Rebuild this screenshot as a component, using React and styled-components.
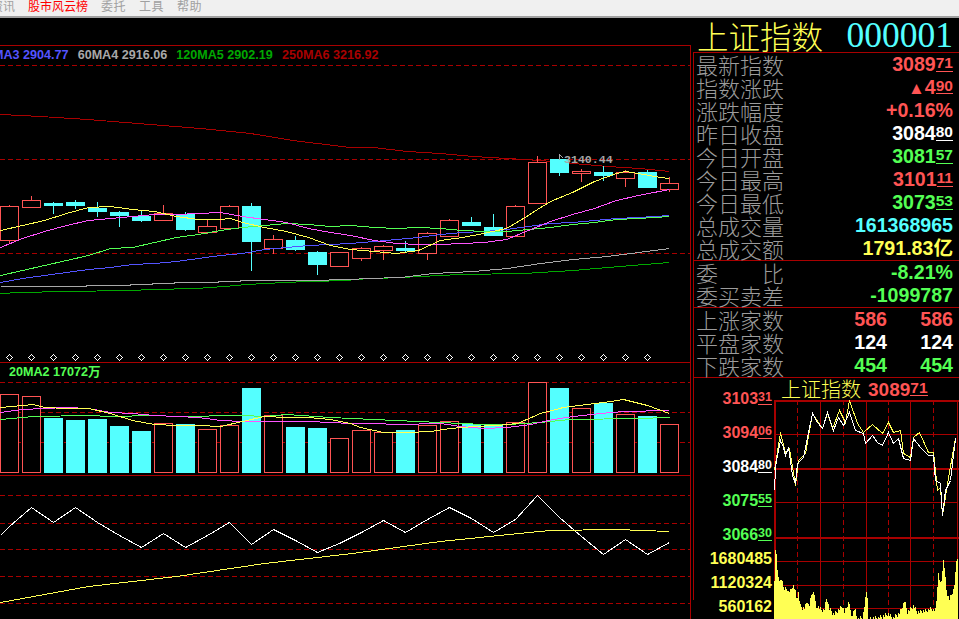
import React from "react";
import styled, { createGlobalStyle } from "styled-components";

const RED = "#ff5454";
const CYAN = "#54ffff";
const YELLOW = "#ffff54";
const MAGENTA = "#ff54ff";
const GREEN = "#54ff54";
const BLUE = "#5454ff";
const GRAY = "#a8a8a8";
const DARKGREEN = "#00a800";
const DARKRED = "#a80000";
const SANS = `"Liberation Sans", Arial, sans-serif`;
const CJK = `"Noto Sans CJK SC", sans-serif`;

const toneColor = { red: RED, white: "#ffffff", green: GREEN, cyan: CYAN, yellow: YELLOW };

const GlobalStyle = createGlobalStyle`
  html, body { margin: 0; padding: 0; background: #000; overflow: hidden; }
  * { box-sizing: border-box; }
`;

const Page = styled.div`
  width: 959px;
  height: 619px;
  background: #000;
  overflow: hidden;
  font-family: ${SANS};
`;
const MenuBar = styled.div`
  display: flex;
  gap: 13px;
  height: 18px;
  background: #f0f0f0;
  border-bottom: 2px solid #a0a0a0;
  overflow: hidden;
  font-family: ${CJK};
  font-size: 12px;
  line-height: 12px;
`;
const MenuItem = styled.span`
  color: ${(p) => (p.$active ? "#ff0000" : "#a0a0a0")};
  margin-left: ${(p) => (p.$clipped ? "-9px" : "0")};
  letter-spacing: ${(p) => (p.$active || p.$clipped ? "0" : "0.5px")};
`;
const Body = styled.div`
  display: flex;
  height: 601px;
`;
const LeftColumn = styled.div`
  width: 691px;
  padding-top: 27px;
`;
const ChartFrame = styled.div`
  height: 574px;
  border-top: 1px solid ${DARKRED};
  border-right: 1px solid ${DARKRED};
  overflow: hidden;
`;
const Legend = styled.div`
  display: flex;
  gap: 9px;
  height: 19px;
  margin-left: ${(p) => p.$shift || 0}px;
  font-size: 12.6px;
  font-weight: 700;
  line-height: 19px;
  white-space: nowrap;
  font-family: ${SANS}, ${CJK};
`;
const LegendItem = styled.span`
  color: ${(p) => p.$color};
`;
const VolumeTitle = styled.div`
  height: 20px;
  padding-left: 9px;
  border-top: 1px solid ${DARKRED};
  font-family: ${SANS}, ${CJK};
  font-size: 12.6px;
  font-weight: 700;
  line-height: 18px;
  white-space: nowrap;
`;
const Plot = styled.svg`
  display: block;
  width: ${(p) => p.$w}px;
  height: ${(p) => p.$h}px;
  background: #000;
`;
const IndicatorPane = styled.div`
  border-top: 1px solid ${DARKRED};
`;
const RightColumn = styled.div`
  width: 266px;
  margin-left: 2px;
`;
const Header = styled.div`
  display: flex;
  justify-content: space-between;
  align-items: center;
  height: 34px;
  padding: 0 6px 0 4px;
`;
const HeaderName = styled.span`
  color: ${YELLOW};
  font-family: ${CJK};
  font-size: 31.5px;
  font-weight: 300;
  line-height: 34px;
`;
const HeaderCode = styled.span`
  color: ${CYAN};
  font-family: "Liberation Serif", serif;
  font-size: 35.5px;
  line-height: 34px;
`;
const StatGroup = styled.div`
  border-top: 1px solid ${DARKRED};
  border-left: 1px solid ${DARKRED};
  padding: 0 6px 0 2px;
`;
const Row = styled.div`
  display: flex;
  justify-content: space-between;
  align-items: center;
  height: 23px;
`;
const Label = styled.span`
  display: flex;
  justify-content: space-between;
  width: 88px;
  color: #9c9c9c;
  font-family: ${CJK};
  font-size: 22px;
  font-weight: 300;
  line-height: 23px;
`;
const Value = styled.span`
  color: ${(p) => toneColor[p.$tone]};
  font-size: ${(p) => p.$size || 19.6}px;
  font-weight: 700;
  line-height: 23px;
  white-space: nowrap;
  font-family: ${SANS}, ${CJK};
`;
const Cents = styled.span`
  display: inline-block;
  font-size: ${(p) => p.$size || 15.5}px;
  line-height: 1;
  border-bottom: 1px solid currentColor;
  vertical-align: 3px;
`;
const Arrow = styled.span`
  font-size: 17px;
`;
const DualValues = styled.div`
  display: flex;
`;
const DualCell = styled(Value)`
  width: 66px;
  text-align: right;
`;
const MiniPanel = styled.div`
  display: flex;
  height: 223px;
  border-top: 1px solid ${DARKRED};
  border-left: 1px solid ${DARKRED};
`;
const Axis = styled.div`
  width: 80px;
  padding: 4px 2px 0 0;
  text-align: right;
`;
const Tick = styled.div`
  height: ${(p) => p.$h}px;
  line-height: ${(p) => p.$h}px;
  margin-top: ${(p) => p.$pull || 0}px;
`;
const MiniMain = styled.div`
  flex: 1;
  min-width: 0;
`;
const MiniTitle = styled.div`
  display: flex;
  gap: 7px;
  height: 22px;
  padding-left: 7px;
  align-items: center;
`;
const MiniName = styled.span`
  color: ${YELLOW};
  font-family: ${CJK};
  font-size: 20px;
  font-weight: 300;
  line-height: 22px;
`;

// [wick top, wick bottom, body top, body bottom, rising]
const candles = [
  [205, 244, 206, 240, 1], [196, 208, 200, 207, 1], [202, 214, 203, 205, 0], [200, 209, 202, 205, 0],
  [202, 217, 208, 211, 0], [211, 227, 212, 215, 0], [210, 222, 216, 220, 0], [205, 221, 213, 220, 1],
  [212, 231, 214, 229, 0], [220, 234, 226, 232, 1], [205, 229, 206, 228, 1], [203, 271, 206, 241, 0],
  [235, 254, 239, 248, 1], [236, 251, 240, 249, 0], [251, 275, 252, 264, 0], [252, 267, 252, 266, 1],
  [247, 261, 248, 258, 1], [245, 260, 246, 250, 1], [241, 253, 248, 250, 0], [232, 260, 233, 253, 1],
  [219, 237, 220, 236, 1], [217, 226, 222, 225, 0], [214, 236, 227, 235, 0], [205, 237, 206, 236, 1],
  [156, 204, 162, 203, 1], [154, 176, 159, 172, 0], [169, 182, 171, 173, 1], [166, 181, 172, 175, 0],
  [170, 187, 172, 178, 1], [170, 188, 172, 187, 0], [177, 192, 183, 189, 1],
];

// x,y pairs in page coordinates
const priceLines = [
  [YELLOW, "0,230 22,225 44,220 66,213 88,207 110,206 132,209 154,211 176,216 198,219 220,219 230,218 242,222 264,227 286,231 308,237 330,245 350,249 374,251 396,253 418,250 440,240 462,237 483,233 506,228 523,218 537,209 550,201 572,192 594,181 616,173 625,171 638,173 660,177 669,178"],
  [MAGENTA, "0,247 22,238 44,231 66,225 88,220 110,218 132,216 154,214 176,214 198,213 220,212 242,216 264,219 286,222 308,228 330,232 350,235 374,240 396,243 418,244 440,244 462,243 484,242 506,239 528,230 550,221 572,214 594,208 616,200 638,195 669,189"],
  [GREEN, "0,275 22,270 44,265 66,260 88,255 110,248 132,247 154,242 176,237 198,234 220,230 242,227 264,225 286,223 308,224 330,226 350,225 374,227 396,228 418,227 440,228 462,230 484,231 506,231 528,229 550,227 572,224 594,222 616,219 638,218 669,216"],
  [BLUE, "0,282 22,278 44,275 66,272 88,269 110,267 132,264 154,263 176,261 198,258 220,255 242,253 264,249 286,247 308,245 330,244 350,243 374,241 396,239 418,237 440,234 462,232 484,231 506,229 528,226 550,223 572,222 594,220 616,218 638,217 669,215"],
  [GRAY, "0,286 86,286 86,285 130,285 130,284 152,284 152,283 174,283 174,282 218,282 218,281 240,281 240,280 307,280 350,279 367,278 400,277 433,273 473,271 507,268 540,263 573,259 607,256 669,248"],
  [DARKGREEN, "0,293 20,292 64,291 130,290 152,289 196,288 224,286 246,284 284,282 307,281 350,280 350,279 400,277 460,274 523,273 573,270 607,267 669,262"],
  [DARKRED, "0,114 20,115 40,116 87,119 150,124 200,128 250,133 292,140 350,147 373,147 407,151 440,153 473,156 507,158 540,160 573,163 607,166 640,168 669,171"],
];

// [bar top, rising]
const volumes = [
  [394, 1], [396, 1], [418, 0], [420, 0], [419, 0], [426, 0], [431, 0], [423, 1], [424, 0], [429, 1], [425, 1],
  [388, 0], [415, 1], [427, 0], [428, 0], [438, 1], [430, 1], [432, 1], [430, 0], [425, 1], [421, 1], [424, 0],
  [424, 0], [422, 1], [382, 1], [388, 0], [408, 1], [403, 0], [414, 1], [416, 0], [424, 1],
];

const volumeLines = [
  [GREEN, "0,419 22,417 33,416 88,415 110,416 154,415 176,416 242,415 264,416 286,414 330,417 373,419 417,421 440,422 483,424 507,424 540,422 570,419 637,418 669,417"],
  [MAGENTA, "0,412 22,409 44,408 66,407 88,408 110,412 132,413 154,415 176,416 198,417 220,420 242,421 264,421 286,421 308,421 330,422 350,423 373,423 397,424 440,423 460,426 483,428 507,427 530,424 553,419 573,416 600,413 623,411 669,410"],
  [YELLOW, "0,407 22,405 33,404 44,407 66,408 88,408 110,413 132,420 154,424 176,425 198,425 220,426 242,421 264,416 286,417 308,417 330,419 350,423 360,427 383,432 407,432 430,431 450,428 473,426 497,425 517,423 540,413 563,407 587,404 610,401 623,399 647,405 669,413"],
];

const oscillator = [526, 507, 522, 507, 522, 535, 547, 533, 547, 535, 522, 544, 529, 540, 552, 543, 532, 520, 532, 519, 507, 518, 532, 519, 495, 517, 536, 554, 539, 554, 542];
const oscillatorAverage = "0,602 88,586 176,576 264,563 352,553 440,541 528,532 550,530 616,529 669,531";

const minuteWhite = [[252,270],[255,200],[262,165],[270,120],[278,140],[285,165],[295,140],[305,225],[315,250],[320,190],[340,170],[350,110],[367,40],[380,65],[395,85],[410,35],[430,90],[445,50],[460,75],[477,35],[495,90],[520,100],[524,130],[545,105],[560,125],[575,135],[595,95],[610,130],[625,115],[640,175],[660,180],[670,115],[690,140],[715,165],[730,165],[735,240],[750,250],[755,345],[765,270],[780,240],[795,115]];
const minuteYellow = [[252,210],[270,95],[285,160],[297,145],[315,255],[325,180],[345,160],[365,40],[395,85],[410,40],[425,85],[447,30],[465,65],[477,0],[500,70],[520,95],[545,72],[575,100],[595,65],[610,95],[630,90],[640,160],[660,170],[670,110],[687,95],[715,155],[730,155],[740,270],[750,260],[755,345],[775,230],[795,115]];
const minutePoints = (list) => list.map(([x, y]) => `${Math.round(690 + x / 3)},${Math.round(400 + y / 3)}`).join(" ");

const minuteVolume = [[12,150],[16,25],[19,100],[23,140],[27,150],[31,155],[35,140],[39,175],[50,175],[54,185],[60,180],[67,165],[73,175],[78,205],[84,185],[88,225],[95,232],[103,232],[110,210],[115,230],[124,185],[131,190],[136,235],[141,225],[147,235],[160,240],[168,200],[175,235],[190,252],[200,240],[215,225],[220,245],[235,213],[240,260],[252,233],[258,265],[275,262],[288,170],[292,267],[310,262],[330,260],[352,250],[365,262],[385,248],[400,210],[408,245],[427,225],[437,245],[465,240],[478,235],[493,240],[500,125],[508,170],[516,85],[525,185],[533,208],[547,175],[555,85]];

// one column per pixel, so the area keeps its spiky outline
const minuteVolumePath = () => {
  const points = minuteVolume.map(([x, y]) => [770 + x / 2.98, 530 + y / 2.98]);
  let d = "M774 619";
  for (let x = 774; x < 958; x++) {
    const next = points.findIndex((p) => p[0] >= x);
    const b = points[next < 0 ? points.length - 1 : next];
    const a = points[Math.max((next < 0 ? points.length - 1 : next) - 1, 0)];
    const t = b[0] === a[0] ? 0 : Math.min(Math.max((x - a[0]) / (b[0] - a[0]), 0), 1);
    const y = a[1] + (b[1] - a[1]) * t;
    const jitter = y > 575 ? ((x * 7) % 5) - 2 : 0;
    d += `V${Math.min(Math.round(y + jitter), 619)}H${x + 1}`;
  }
  return `${d}V619Z`;
};

const Dashed = ({ y, x2 = 690 }) => (
  <line x1="0" x2={x2} y1={y + 0.5} y2={y + 0.5} stroke={DARKRED} strokeDasharray="5 3" />
);
const Line = ({ color, points }) => (
  <polyline points={points} transform="translate(0.5 0.5)" fill="none" stroke={color} />
);

function PricePlot() {
  return (
    <Plot $w={690} $h={297} viewBox="0 65 690 297" shapeRendering="crispEdges">
      <Dashed y={65} />
      <Dashed y={159} />
      <Dashed y={253} />
      {priceLines.slice().reverse().map(([color, points]) => (
        <Line key={color} color={color} points={points} />
      ))}
      {candles.map(([top, bottom, bodyTop, bodyBottom, rising], i) => {
        const x = 22 * i;
        const color = rising ? RED : CYAN;
        return (
          <g key={i}>
            <line x1={x + 9.5} x2={x + 9.5} y1={top} y2={bottom} stroke={color} />
            <rect x={x + 0.5} y={bodyTop + 0.5} width={18} height={bodyBottom - bodyTop} fill={rising ? "#000" : CYAN} stroke={color} />
          </g>
        );
      })}
      {priceLines.slice(0, 4).reverse().map(([color, points]) => (
        <Line key={color} color={color} points={points} />
      ))}
      <path d="M559.5 160V154.5L563.5 158.5" fill="none" stroke={GRAY} />
      <text x="564" y="163" fill={GRAY} fontFamily={`"Liberation Mono", monospace`} fontWeight="700" fontSize="11.6" shapeRendering="auto">3140.44</text>
      {candles.slice(0, 30).map((_, i) => (
        <path key={i} d={`M${22 * i + 9.5} 354.5L${22 * i + 12.5} 357.5L${22 * i + 9.5} 360.5L${22 * i + 6.5} 357.5Z`} fill="none" stroke="#ffffff" />
      ))}
    </Plot>
  );
}

function VolumePlot() {
  return (
    <Plot $w={690} $h={93} viewBox="0 382 690 93" shapeRendering="crispEdges">
      <Dashed y={382} />
      <Dashed y={412} />
      <Dashed y={442} />
      {volumes.map(([top, rising], i) =>
        rising ? (
          <rect key={i} x={22 * i + 0.5} y={top + 0.5} width={18} height={472 - top} fill="#000" stroke={RED} />
        ) : (
          <rect key={i} x={22 * i} y={top} width={19} height={473 - top} fill={CYAN} />
        )
      )}
      {volumeLines.map(([color, points]) => (
        <Line key={color} color={color} points={points} />
      ))}
    </Plot>
  );
}

function IndicatorPlot() {
  const points = oscillator.map((y, i) => `${22 * i + 9},${y}`).join(" ");
  return (
    <Plot $w={690} $h={143} viewBox="0 476 690 143" shapeRendering="crispEdges">
      {[495, 523, 549, 576, 603].map((y) => (
        <Dashed key={y} y={y} />
      ))}
      <Line color="#ffffff" points={`0,535 ${points}`} />
      <Line color={YELLOW} points={oscillatorAverage} />
    </Plot>
  );
}

function MinutePlot() {
  return (
    <Plot $w={185} $h={219} viewBox="774 400 185 219" shapeRendering="crispEdges">
      <rect x="774" y="400" width="2" height="219" fill={DARKRED} />
      <rect x="774" y="400" width="185" height="2" fill={DARKRED} />
      <rect x="774" y="468" width="185" height="2" fill={DARKRED} />
      <rect x="774" y="537" width="185" height="2" fill={DARKRED} />
      {[434, 502, 561, 585, 608].map((y) => (
        <line key={y} x1="774" x2="958" y1={y + 0.5} y2={y + 0.5} stroke={DARKRED} />
      ))}
      {[820, 866, 910, 957].map((x) => (
        <line key={x} x1={x + 0.5} x2={x + 0.5} y1="400" y2="619" stroke={DARKRED} />
      ))}
      {[797, 843, 888, 933].map((x) => (
        <line key={x} x1={x + 0.5} x2={x + 0.5} y1="400" y2="619" stroke={DARKRED} strokeDasharray="5 3" />
      ))}
      <path d={minuteVolumePath()} fill={YELLOW} />
      <Line color={YELLOW} points={minutePoints(minuteYellow)} />
      <Line color="#ffffff" points={minutePoints(minuteWhite)} />
    </Plot>
  );
}

const Price = ({ tone, whole, cents }) => (
  <Value $tone={tone}>
    {whole}
    <Cents>{cents}</Cents>
  </Value>
);

const AxisPrice = ({ tone, whole, cents }) => (
  <Tick $h={34}>
    <Value $tone={tone} $size={16}>
      {whole}
      <Cents $size={12.5}>{cents}</Cents>
    </Value>
  </Tick>
);

export default function App() {
  return (
    <Page>
      <GlobalStyle />
      <MenuBar>
        <MenuItem $clipped>资讯</MenuItem>
        <MenuItem $active>股市风云榜</MenuItem>
        <MenuItem>委托</MenuItem>
        <MenuItem>工具</MenuItem>
        <MenuItem>帮助</MenuItem>
      </MenuBar>
      <Body>
        <LeftColumn>
          <ChartFrame>
            <Legend $shift={-21}>
              <LegendItem $color={BLUE}>30MA3 2904.77</LegendItem>
              <LegendItem $color={GRAY}>60MA4 2916.06</LegendItem>
              <LegendItem $color={DARKGREEN}>120MA5 2902.19</LegendItem>
              <LegendItem $color={DARKRED}>250MA6 3216.92</LegendItem>
            </Legend>
            <PricePlot />
            <VolumeTitle>
              <LegendItem $color={GREEN}>20MA2 17072万</LegendItem>
            </VolumeTitle>
            <VolumePlot />
            <IndicatorPane>
              <IndicatorPlot />
            </IndicatorPane>
          </ChartFrame>
        </LeftColumn>
        <RightColumn>
          <Header>
            <HeaderName>上证指数</HeaderName>
            <HeaderCode>000001</HeaderCode>
          </Header>
          <StatGroup>
            <Row><Label>最新指数</Label><Price tone="red" whole="3089" cents="71" /></Row>
            <Row>
              <Label>指数涨跌</Label>
              <Value $tone="red"><Arrow>▲</Arrow>4<Cents>90</Cents></Value>
            </Row>
            <Row><Label>涨跌幅度</Label><Value $tone="red">+0.16%</Value></Row>
            <Row><Label>昨日收盘</Label><Price tone="white" whole="3084" cents="80" /></Row>
            <Row><Label>今日开盘</Label><Price tone="green" whole="3081" cents="57" /></Row>
            <Row><Label>今日最高</Label><Price tone="red" whole="3101" cents="11" /></Row>
            <Row><Label>今日最低</Label><Price tone="green" whole="3073" cents="53" /></Row>
            <Row><Label>总成交量</Label><Value $tone="cyan">161368965</Value></Row>
            <Row><Label>总成交额</Label><Value $tone="yellow">1791.83亿</Value></Row>
          </StatGroup>
          <StatGroup>
            <Row><Label><span>委</span><span>比</span></Label><Value $tone="green">-8.21%</Value></Row>
            <Row><Label>委买卖差</Label><Value $tone="green">-1099787</Value></Row>
          </StatGroup>
          <StatGroup>
            <Row>
              <Label>上涨家数</Label>
              <DualValues><DualCell $tone="red">586</DualCell><DualCell $tone="red">586</DualCell></DualValues>
            </Row>
            <Row>
              <Label>平盘家数</Label>
              <DualValues><DualCell $tone="white">124</DualCell><DualCell $tone="white">124</DualCell></DualValues>
            </Row>
            <Row>
              <Label>下跌家数</Label>
              <DualValues><DualCell $tone="green">454</DualCell><DualCell $tone="green">454</DualCell></DualValues>
            </Row>
          </StatGroup>
          <MiniPanel>
            <Axis>
              <AxisPrice tone="red" whole="3103" cents="31" />
              <AxisPrice tone="red" whole="3094" cents="06" />
              <AxisPrice tone="white" whole="3084" cents="80" />
              <AxisPrice tone="green" whole="3075" cents="55" />
              <AxisPrice tone="green" whole="3066" cents="30" />
              <Tick $h={24} $pull={-5}><Value $tone="yellow" $size={16}>1680485</Value></Tick>
              <Tick $h={24}><Value $tone="yellow" $size={16}>1120324</Value></Tick>
              <Tick $h={24}><Value $tone="yellow" $size={16}>560162</Value></Tick>
            </Axis>
            <MiniMain>
              <MiniTitle>
                <MiniName>上证指数</MiniName>
                <Value $tone="red" $size={19}>3089<Cents>71</Cents></Value>
              </MiniTitle>
              <MinutePlot />
            </MiniMain>
          </MiniPanel>
        </RightColumn>
      </Body>
    </Page>
  );
}
